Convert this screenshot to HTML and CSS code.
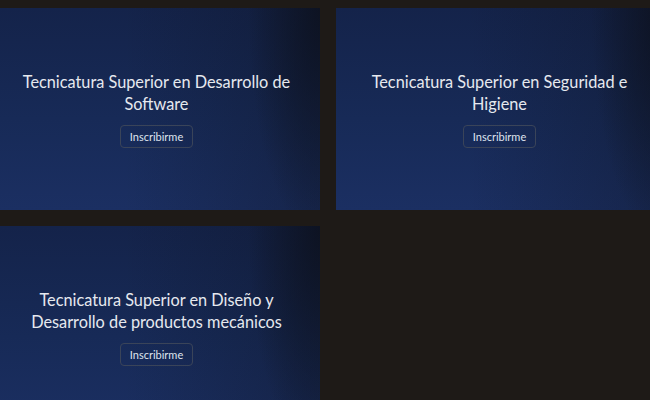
FILE: index.html
```html
<!DOCTYPE html>
<html lang="es">
<head>
    <meta charset="UTF-8">
    <meta name="viewport" content="width=device-width, initial-scale=1.0">
    <title>Carreras</title>
    <link rel="stylesheet" href="styles.css">
</head>
<body>
    <main class="cursos">
        <article class="curso">
            <div class="curso-body">
                <h2 class="curso-titulo">Tecnicatura Superior en Desarrollo de Software</h2>
                <button class="btn-inscribir">Inscribirme</button>
            </div>
        </article>
        <article class="curso">
            <div class="curso-body">
                <h2 class="curso-titulo">Tecnicatura Superior en Seguridad e Higiene</h2>
                <button class="btn-inscribir">Inscribirme</button>
            </div>
        </article>
        <article class="curso">
            <div class="curso-body">
                <h2 class="curso-titulo">Tecnicatura Superior en Diseño y Desarrollo de productos mecánicos</h2>
                <button class="btn-inscribir">Inscribirme</button>
            </div>
        </article>
    </main>
</body>
</html>
```

FILE: styles.css
```css
body {
    margin: 0;
    padding: 0;
    background-color: #1e1a17;
    font-family: Lato, "Open Sans", sans-serif;
    overflow: hidden;
}

.cursos {
    display: grid;
    grid-template-columns: repeat(2, 327px);
    gap: 16px;
    margin: 8px 0 0 -7px;
}

.curso {
    height: 202px;
    display: flex;
    align-items: center;
    justify-content: center;
    padding: 0 20px;
    text-align: center;
    background:
        radial-gradient(ellipse 22% 115% at 100% 0%, rgba(13, 18, 32, 0.92), rgba(13, 18, 32, 0) 100%),
        linear-gradient(to right, rgba(13, 18, 32, 0) 40%, rgba(13, 18, 32, 0.35) 100%),
        linear-gradient(to bottom, #14234a 0%, #172a57 55%, #1b2f62 100%);
}

.curso-titulo {
    margin: 0 0 10px;
    font-size: 16.3px;
    font-weight: normal;
    line-height: 22px;
    color: #e6e9ef;
}

.btn-inscribir {
    font-family: inherit;
    font-size: 11px;
    line-height: 13px;
    color: #dfe4ee;
    background-color: transparent;
    border: 1px solid #3a4459;
    border-radius: 4px;
    padding: 4px 9px;
    cursor: pointer;
}
```
